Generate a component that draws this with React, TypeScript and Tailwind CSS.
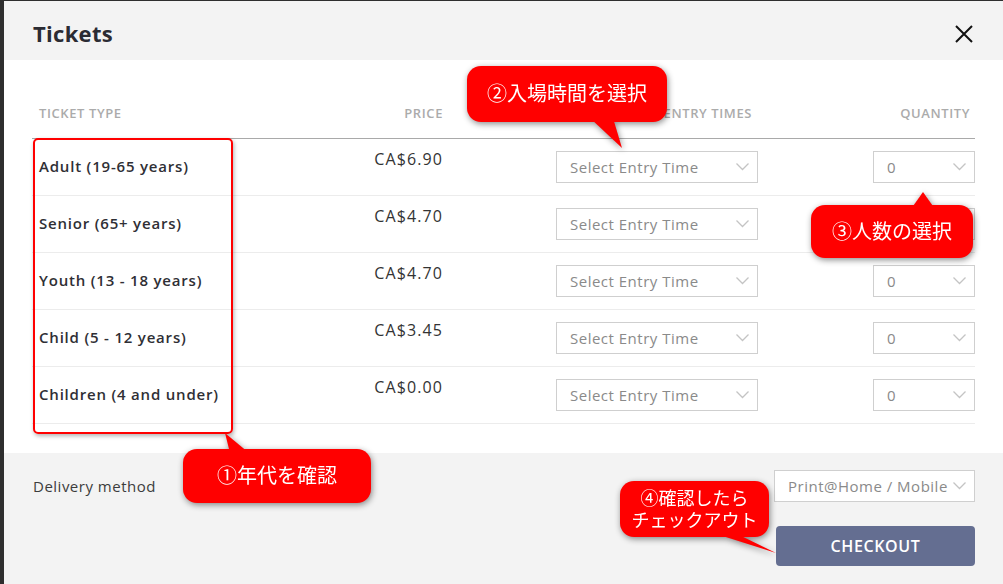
import { ReactNode } from "react";

type Ticket = {
  name: string;
  price: string;
};

const tickets: Ticket[] = [
  { name: "Adult (19-65 years)", price: "CA$6.90" },
  { name: "Senior (65+ years)", price: "CA$4.70" },
  { name: "Youth (13 - 18 years)", price: "CA$4.70" },
  { name: "Child (5 - 12 years)", price: "CA$3.45" },
  { name: "Children (4 and under)", price: "CA$0.00" },
];

const Chevron = () => (
  <svg width="13" height="8" viewBox="0 0 13 8" className="shrink-0">
    <path d="M0.5 0.5 L6.5 6.5 L12.5 0.5" fill="none" stroke="#c4c4c4" strokeWidth="1.3" />
  </svg>
);

// fake select box, just the closed look
const Select = ({ label, className }: { label: string; className: string }) => (
  <div
    className={`h-[32px] border border-[#cfcfcf] bg-white flex items-center justify-between pl-[13px] pr-[8px] text-[15px] tracking-[0.5px] text-[#8a8a8a] ${className}`}
  >
    <span>{label}</span>
    <Chevron />
  </div>
);

// red annotation bubble, tail drawn with svg
const Callout = ({
  box,
  tail,
  children,
}: {
  box: string;
  tail: string;
  children: ReactNode;
}) => (
  <div className="absolute inset-0 pointer-events-none [filter:drop-shadow(1px_2px_3px_rgba(0,0,0,0.45))]">
    <svg width="1003" height="584" className="absolute left-0 top-0">
      <polygon points={tail} fill="#ff0000" />
    </svg>
    <div
      className={`absolute bg-[#ff0000] rounded-[14px] flex flex-col items-center justify-center text-white leading-[22px] ${box}`}
    >
      {children}
    </div>
  </div>
);

export default function App() {
  return (
    <div
      className="relative w-[1003px] h-[584px] overflow-hidden bg-[#2e2e2e] pl-[4px] pt-[1px]"
      style={{ fontFamily: '"Open Sans", "Noto Sans CJK JP", sans-serif' }}
    >
      <div className="flex flex-col h-full bg-white">
        {/* header */}
        <div className="h-[59px] shrink-0 bg-[#f3f3f3] flex items-center justify-between pl-[29px] pr-[30px] pt-[6px]">
          <h1 className="text-[22px] font-bold text-[#2b2b33] tracking-[0.3px]">Tickets</h1>
          <svg width="18" height="18" viewBox="0 0 18 18">
            <path d="M1 1 L17 17 M17 1 L1 17" stroke="#111" strokeWidth="2" />
          </svg>
        </div>

        {/* ticket table */}
        <div className="px-[28px] pt-[42px] pb-[29px] shrink-0">
          <div className="flex items-center h-[37px] pb-[12px] border-b border-[#a9a9a9] text-[13px] font-semibold text-[#ababab] tracking-[0.6px]">
            <div className="w-[307px] pl-[7px]">TICKET TYPE</div>
            <div className="w-[104px] text-right">PRICE</div>
            <div className="w-[315px] text-right pr-[6px]">ENTRY TIMES</div>
            <div className="flex-1 text-right pr-[5px]">QUANTITY</div>
          </div>
          {tickets.map((t, i) => (
            <div key={i} className="flex items-start h-[57px] border-b border-[#ececec]">
              <div className="w-[307px] pl-[7px] pt-[17px] text-[15px] font-semibold text-[#2f2f35] leading-[20px] tracking-[0.8px]">
                {t.name}
              </div>
              <div className="w-[104px] pt-[10px] text-right text-[16px] text-[#333] leading-[20px] tracking-[1.1px]">
                {t.price}
              </div>
              <div className="w-[315px] pt-[12px] pl-[113px]">
                <Select label="Select Entry Time" className="w-[202px]" />
              </div>
              <div className="flex-1 pt-[12px] flex justify-end">
                <Select label="0" className="w-[102px]" />
              </div>
            </div>
          ))}
        </div>

        {/* footer */}
        <div className="flex-1 bg-[#f3f3f3] flex justify-between items-start pl-[29px] pr-[28px] pt-[17px]">
          <div className="mt-[5px] text-[15px] text-[#3c3c3c] tracking-[0.5px]">Delivery method</div>
          <div className="flex flex-col items-end gap-[24px]">
            <Select label="Print@Home / Mobile" className="w-[201px]" />
            <button className="w-[199px] h-[40px] rounded-[4px] bg-[#646e91] text-white text-[16px] font-semibold tracking-[0.6px]">
              CHECKOUT
            </button>
          </div>
        </div>
      </div>

      {/* annotations */}
      <div className="absolute left-[33px] top-[138px] w-[200px] h-[296px] border-2 border-[#ff0000] rounded-[5px] shadow-[1px_2px_4px_rgba(0,0,0,0.3)]" />

      <Callout box="left-[467px] top-[66px] w-[200px] h-[56px] text-[20px]" tail="590,118 613,118 622,148">
        ②入場時間を選択
      </Callout>
      <Callout box="left-[811px] top-[205px] w-[162px] h-[53px] text-[20px]" tail="911,209 935,209 923,192">
        ③人数の選択
      </Callout>
      <Callout box="left-[183px] top-[449px] w-[188px] h-[54px] text-[20px]" tail="230,453 249,453 225,433">
        ①年代を確認
      </Callout>
      <Callout box="left-[620px] top-[481px] w-[149px] h-[56px] text-[18px]" tail="710,532 733,532 776,553">
        <span>④確認したら</span>
        <span>チェックアウト</span>
      </Callout>
    </div>
  );
}
